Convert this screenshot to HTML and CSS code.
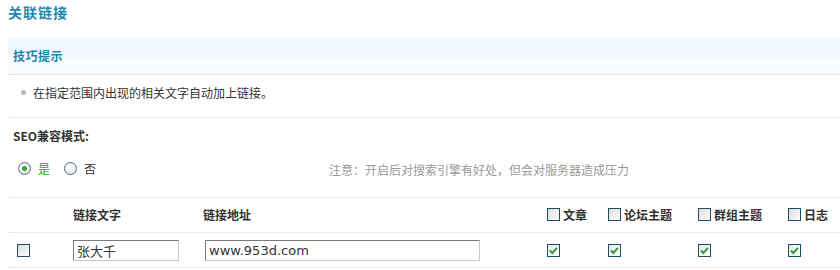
FILE: index.html
```html
<!DOCTYPE html>
<html lang="zh">
<head>
<meta charset="utf-8">
<title>关联链接</title>
<link rel="stylesheet" href="styles.css">
</head>
<body>
<div class="page">
  <h1 class="title">关联链接</h1>
  <div class="tips">
    <h2 class="tips-head">技巧提示</h2>
  </div>
  <ul class="tip-list">
    <li>在指定范围内出现的相关文字自动加上链接。</li>
  </ul>
  <div class="seo">
    <div class="seo-label">SEO兼容模式:</div>
    <div class="seo-row">
      <div class="radios">
        <label class="radio-item on"><span class="radio checked"></span>是</label>
        <label class="radio-item"><span class="radio"></span>否</label>
      </div>
      <div class="note">注意：开启后对搜索引擎有好处，但会对服务器造成压力</div>
    </div>
  </div>
  <div class="grid head">
    <div class="cell"></div>
    <div class="cell">链接文字</div>
    <div class="cell">链接地址</div>
    <div class="cell"><span class="cb"></span>文章</div>
    <div class="cell"><span class="cb"></span>论坛主题</div>
    <div class="cell"><span class="cb"></span>群组主题</div>
    <div class="cell"><span class="cb"></span>日志</div>
  </div>
  <div class="grid row">
    <div class="cell first"><span class="cb"></span></div>
    <div class="cell"><input class="txt short" type="text" value="张大千"></div>
    <div class="cell"><input class="txt url" type="text" value="www.953d.com"></div>
    <div class="cell"><span class="cb checked"><svg viewBox="0 0 11 11" width="11" height="11"><path d="M2 5.5 L4.3 8 L9 2.8" fill="none" stroke="#2f9a3b" stroke-width="2"/></svg></span></div>
    <div class="cell"><span class="cb checked"><svg viewBox="0 0 11 11" width="11" height="11"><path d="M2 5.5 L4.3 8 L9 2.8" fill="none" stroke="#2f9a3b" stroke-width="2"/></svg></span></div>
    <div class="cell"><span class="cb checked"><svg viewBox="0 0 11 11" width="11" height="11"><path d="M2 5.5 L4.3 8 L9 2.8" fill="none" stroke="#2f9a3b" stroke-width="2"/></svg></span></div>
    <div class="cell"><span class="cb checked"><svg viewBox="0 0 11 11" width="11" height="11"><path d="M2 5.5 L4.3 8 L9 2.8" fill="none" stroke="#2f9a3b" stroke-width="2"/></svg></span></div>
  </div>
</div>
</body>
</html>
```

FILE: styles.css
```css
* { box-sizing: border-box; }
html, body {
  margin: 0;
  padding: 0;
  background: #fff;
}
body {
  font-family: "Noto Sans CJK SC", "Liberation Sans", sans-serif;
  font-size: 12px;
  color: #333;
  width: 840px;
  overflow: hidden;
}
.page {
  padding-left: 8px;
}
.title {
  margin: 0;
  font-size: 14px;
  line-height: 24px;
  font-weight: bold;
  letter-spacing: 1px;
  color: #1f88ab;
}
.tips {
  margin-top: 14px;
  height: 37px;
  background: linear-gradient(to bottom, #f8fbfe 0, #eef6fd 4px, #eef6fd 11px, #f5f6fd 12px, #f5f6fd 19px, #f6fcfd 20px, #f6fdfd 36px);
  border-bottom: 1px dotted #d4d4d4;
  padding-left: 5px;
}
.tips-head {
  margin: 0;
  font-size: 12px;
  line-height: 36px;
  font-weight: bold;
  letter-spacing: 0.5px;
  color: #1c86a8;
}
.tip-list {
  margin: 0;
  padding: 10px 0 16px 25px;
  list-style: none;
  border-bottom: 1px dotted #dcdcdc;
}
.tip-list li {
  line-height: 16px;
  position: relative;
}
.tip-list li::before {
  content: "";
  position: absolute;
  left: -12px;
  top: 5px;
  width: 5px;
  height: 5px;
  border-radius: 50%;
  background: #b8b8b8;
}
.seo {
  padding: 8px 0 17px 5px;
  border-bottom: 1px dotted #dcdcdc;
}
.seo-label {
  font-weight: bold;
  line-height: 20px;
  color: #333;
  font-size: 12px;
}
.seo-row {
  display: flex;
  margin-top: 11px;
}
.radios {
  display: flex;
  width: 316px;
  padding-left: 5px;
  line-height: 20px;
}
.radio-item {
  display: flex;
  align-items: center;
  gap: 7px;
  margin-right: 14px;
}
.radio-item.on { color: #2ea52e; }
.radio {
  width: 13px;
  height: 13px;
  border-radius: 50%;
  border: 1px solid #4e6b80;
  background: radial-gradient(circle at 40% 35%, #fff 0, #f4f4f4 40%, #d6d9dc 100%);
  display: inline-flex;
  align-items: center;
  justify-content: center;
}
.radio.checked::after {
  content: "";
  width: 5px;
  height: 5px;
  border-radius: 50%;
  background: #3aa13a;
}
.note {
  color: #999;
  line-height: 20px;
  margin-top: 3px;
}
.grid {
  display: grid;
  grid-template-columns: 60px 130px 344px 61px 90px 90px 1fr;
  padding-left: 5px;
  border-bottom: 1px dotted #dcdcdc;
  align-items: center;
}
.grid.head {
  height: 35px;
  padding-bottom: 2px;
  font-weight: bold;
  color: #333;
}
.grid.row { height: 35px; }
.cell {
  display: flex;
  align-items: center;
  gap: 3px;
}
.cell.first { padding-left: 4px; }
.cb {
  width: 13px;
  height: 13px;
  border: 1px solid #1d4f5f;
  background: linear-gradient(135deg, #d8d9da 0, #eeeeee 50%, #fbfbfb 100%);
  display: inline-flex;
  align-items: center;
  justify-content: center;
  flex: none;
}
.cb.checked { background: linear-gradient(135deg, #e6e7e8 0, #f5f5f5 50%, #fdfdfd 100%); }
.txt {
  height: 21px;
  border: 1px solid #c8c8c8;
  border-top-color: #7a7a7a;
  border-left-color: #7a7a7a;
  padding: 0 3px;
  margin: 0;
  background: #fff;
  color: #333;
  outline: none;
}
.txt.short {
  width: 106px;
  font-family: "Noto Sans CJK SC", sans-serif;
  font-size: 13px;
}
.txt.url {
  width: 275px;
  margin-left: 2px;
  font-family: "DejaVu Sans", sans-serif;
  font-size: 13px;
  color: #333;
}
```
